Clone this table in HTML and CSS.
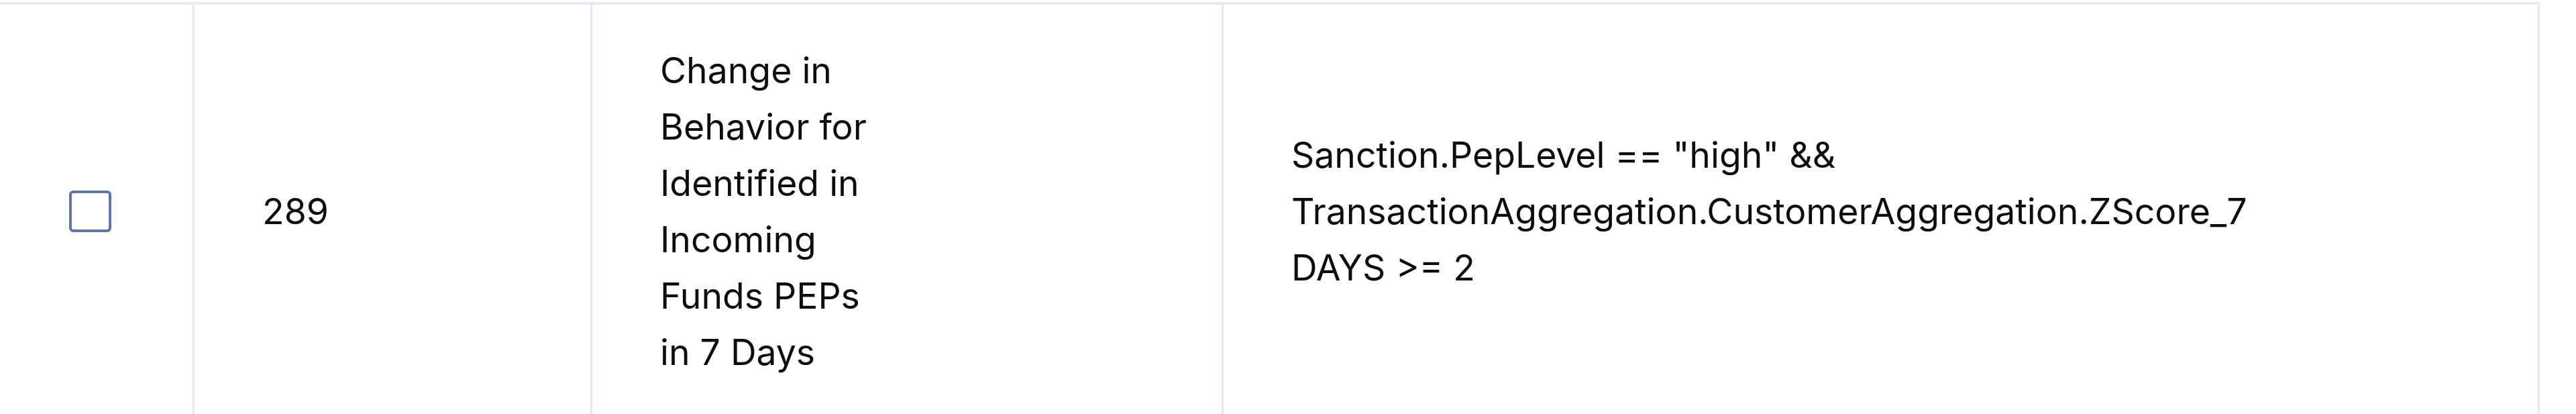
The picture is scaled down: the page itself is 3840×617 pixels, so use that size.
FILE: index.html
```html
<!DOCTYPE html>
<html lang="en">
<head>
<meta charset="utf-8">
<title>Rules</title>
<link rel="stylesheet" href="styles.css">
</head>
<body>
<div class="table">
  <div class="row">
    <div class="cell cell-check"><span class="checkbox" role="checkbox" aria-checked="false"></span></div>
    <div class="cell cell-id">289</div>
    <div class="cell cell-name"><span class="name">Change in Behavior for Identified in Incoming Funds PEPs in 7 Days</span></div>
    <div class="cell cell-cond"><span class="cond">Sanction.PepLevel == "high" &amp;&amp; TransactionAggregation.CustomerAggregation.ZScore_7DAYS &gt;= 2</span></div>
  </div>
</div>
</body>
</html>
```

FILE: styles.css
```css
html, body {
  margin: 0;
  padding: 0;
  background: #ffffff;
  overflow: hidden;
}
body {
  font-family: Inter, "Noto Sans", sans-serif;
  font-size: 53.5px;
  line-height: 84px;
  color: #0d0d0d;
  padding-top: 3px;
}
.table {
  width: 3786px;
}
.row {
  display: grid;
  grid-template-columns: 287px 593px 941px 1965px;
  border-top: 4px solid #e6e9f1;
}
.cell {
  display: flex;
  align-items: center;
  padding: 56px 0 56px 101px;
  border-left: 3px solid #e6e9f1;
  min-height: 504px;
}
.cell-check {
  border-left: none;
  padding-left: 103px;
}
.cell:last-child {
  border-right: 3px solid #e6e9f1;
}
.checkbox {
  display: block;
  width: 55px;
  height: 54px;
  border: 4px solid #5f78a3;
  border-radius: 6px;
}
.name {
  display: block;
  max-width: 330px;
}
.cond {
  display: block;
  max-width: 1462px;
  overflow-wrap: anywhere;
}
```
